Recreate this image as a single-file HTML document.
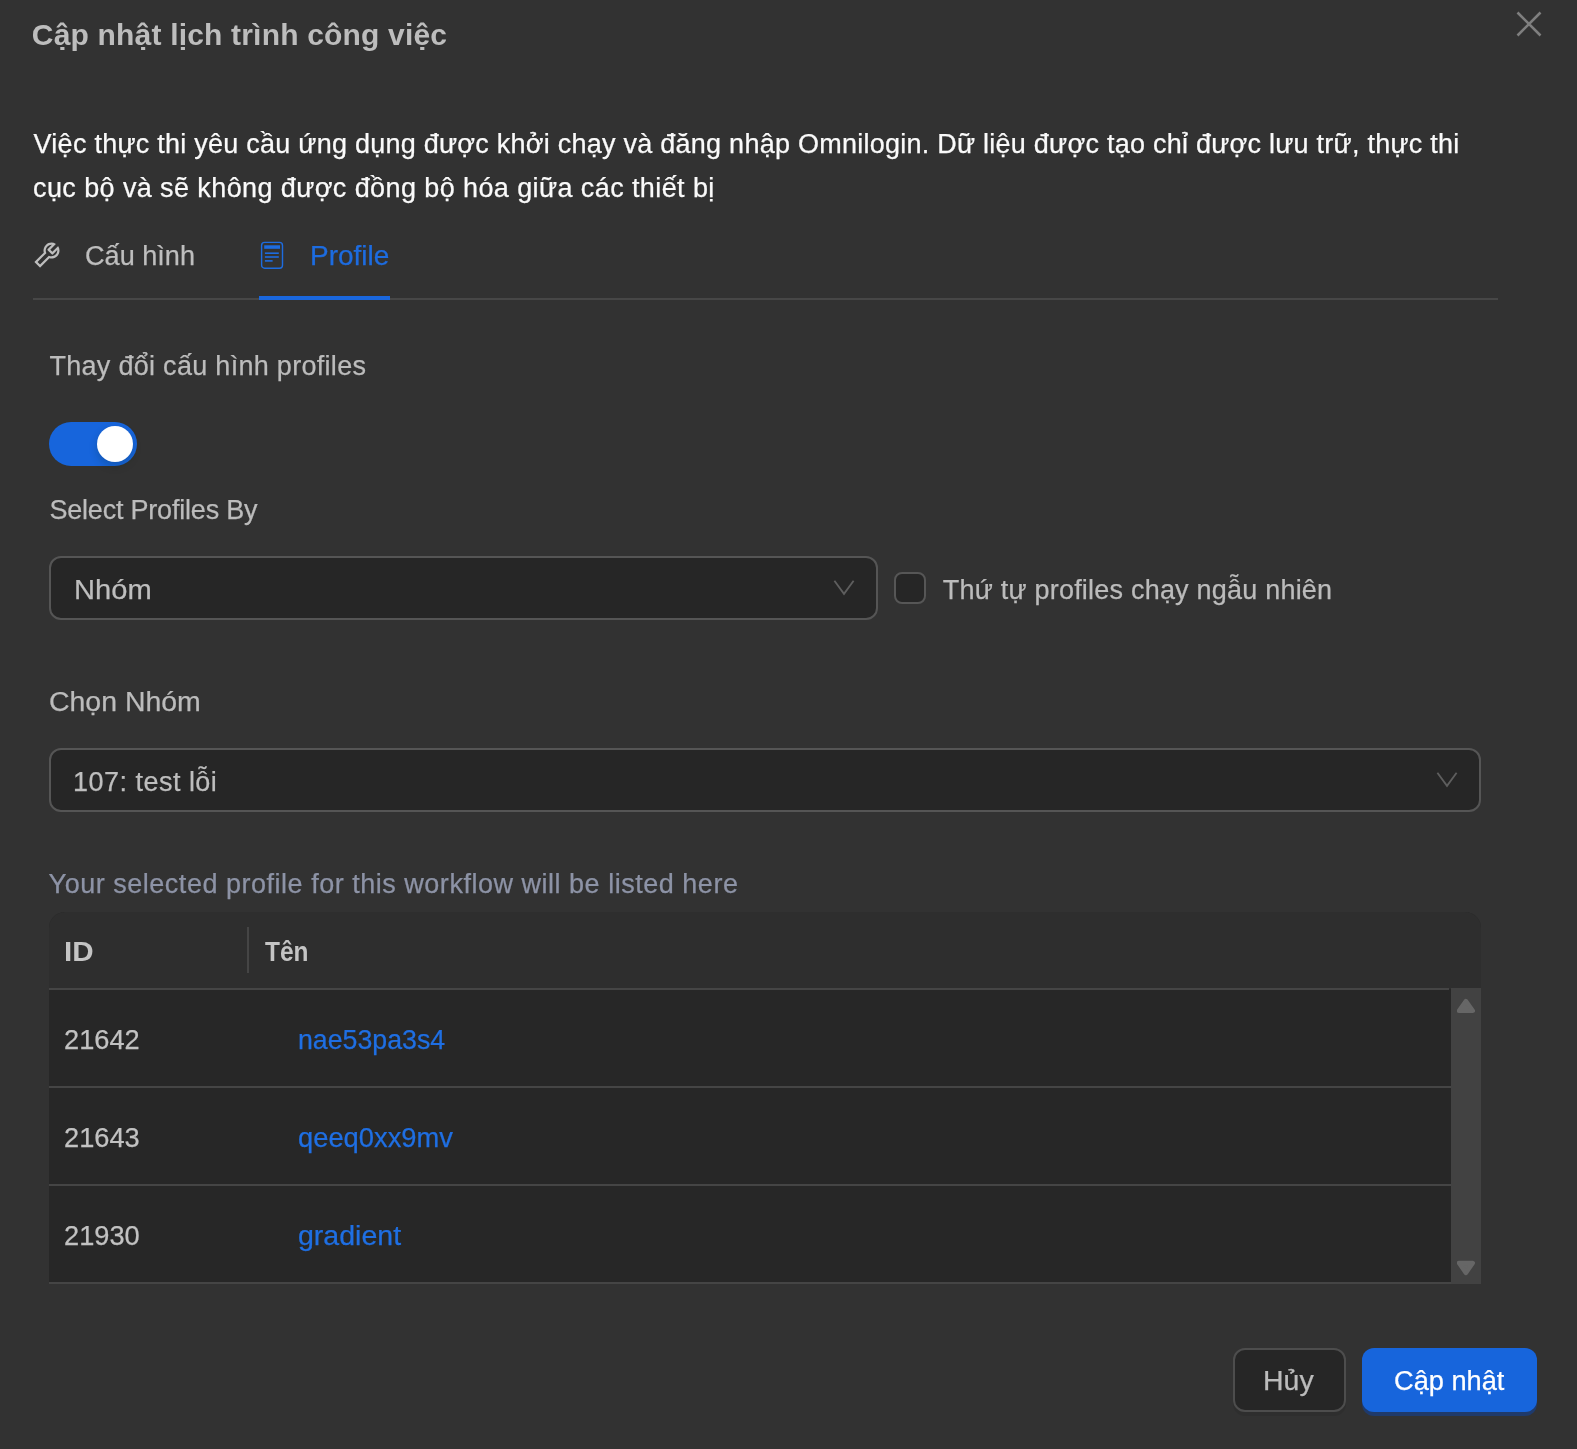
<!DOCTYPE html>
<html lang="vi">
<head>
<meta charset="utf-8">
<title>Cập nhật lịch trình công việc</title>
<style>
*{box-sizing:border-box;margin:0;padding:0}
html,body{width:1577px;height:1449px;overflow:hidden;background:#323232}
body{position:relative;font-family:"Liberation Sans",sans-serif;font-size:27px;color:#bcbcbc;-webkit-text-stroke:0.25px}
#root{position:absolute;left:0;top:0;width:1577px;height:1449px;will-change:transform}
.abs{position:absolute;white-space:nowrap;line-height:1}
.t{display:inline-block;white-space:nowrap;transform-origin:0 50%}
/* header */
.modal-title{left:33px;top:15px;height:40px;line-height:40px;font-size:30px;font-weight:700;color:#bdbdbd;-webkit-text-stroke:0}
.close{left:1515px;top:10px;width:28px;height:28px}
.desc{left:33px;top:122px;width:1470px;color:#fafafa;font-size:27px}
.desc>span{display:block;height:44px;line-height:44px;white-space:nowrap}
/* tabs */
.tabs{left:33px;top:220px;width:1465px;height:80px;border-bottom:2px solid #474747}
.tab{position:absolute;top:0;height:80px;display:flex;align-items:center}
.tab .lbl{position:absolute;top:18px;height:36px;line-height:36px}
.tab1{left:0;width:165px;color:#bebebe}
.tab2{left:226px;width:131px;color:#1d6ce0}
.ink{position:absolute;left:226px;top:76px;width:131px;height:4px;background:#1a67dd}
/* form */
.label{left:49px;height:36px;line-height:36px;color:#bcbcbc}
.switch{left:49px;top:422px;width:88px;height:44px;border-radius:22px;background:#1765dc}
.switch i{position:absolute;left:48px;top:4px;width:36px;height:36px;border-radius:50%;background:#fff;box-shadow:0 4px 8px rgba(0,35,11,.2)}
.select{height:64px;border:2px solid #555;border-radius:12px;background:#262626;color:#bebebe}
.select .val{position:absolute;left:23px;top:14px;height:36px;line-height:36px}
.select svg{position:absolute;right:21px;top:22px}
.checkbox{left:894px;top:572px;width:32px;height:32px;border:2px solid #565656;border-radius:8px;background:#262626}
/* table */
.hint{left:49px;top:866px;height:36px;line-height:36px;color:#8d93a6}
.table{left:49px;top:912px;width:1432px;height:372px;border-radius:16px 16px 0 0;overflow:hidden;background:#272727}
.thead{position:absolute;left:0;top:0;width:1432px;height:77px;background:#2e2e2e;color:#c4c4c4;-webkit-text-stroke:0}
.thead b{font-weight:700;position:absolute;top:22px;height:36px;line-height:36px}
.thead .sep{position:absolute;left:198px;top:15px;width:2px;height:46px;background:#454545}
.hline{position:absolute;left:0;width:1402px;height:2px;background:#454545}
.row{position:absolute;left:0;width:1402px;height:96px}
.row>span,.row>a{position:absolute;top:32px;height:36px;line-height:36px;text-decoration:none}
.row>span{left:16px;color:#c2c2c2}
.row>a{left:248px;color:#1f6fe3}
.sbar{position:absolute;left:1402px;top:76px;width:30px;height:296px;background:#424242}
/* footer */
.btn{top:1348px;height:64px;border-radius:12px;text-align:center;font-size:27px}
.btn>span{display:inline-block;line-height:62px}
.btn-cancel{left:1233px;width:113px;border:2px solid #4d4d4d;background:#262626;color:#bcbcbc;box-shadow:0 4px 0 rgba(0,0,0,.08)}
.btn-ok{left:1362px;width:175px;background:#1765dc;color:#fff;box-shadow:0 4px 0 #1f3a6b}
.btn-ok>span{line-height:66px}
</style>
</head>
<body>
<div id="root">
<div class="abs modal-title"><span class="t" id="t_title" style="letter-spacing:0.185px;margin-left:-1.2px">Cập nhật lịch trình công việc</span></div>
<svg class="abs close" viewBox="0 0 28 28"><path d="M2.5 2.5L25.5 25.5M25.5 2.5L2.5 25.5" stroke="#7f7f7f" stroke-width="2.6" fill="none"/></svg>

<div class="abs desc">
<span><span class="t" id="t_d1" style="letter-spacing:0.250px;margin-left:0.6px">Việc thực thi yêu cầu ứng dụng được khởi chạy và đăng nhập Omnilogin. Dữ liệu được tạo chỉ được lưu trữ, thực thi</span></span>
<span><span class="t" id="t_d2" style="letter-spacing:0.405px;margin-left:0.0px">cục bộ và sẽ không được đồng bộ hóa giữa các thiết bị</span></span>
</div>

<div class="abs tabs">
  <div class="tab tab1">
    <svg style="position:absolute;left:0px;top:21px" width="28" height="28" viewBox="64 64 896 896" fill="#bebebe"><path d="M876.6 239.5c-.5-.9-1.2-1.8-2-2.500-5-5-13.100-5-18.100 0L684.200 409.300l-67.900-67.900L788.700 169c.8-.8 1.400-1.600 2-2.500 3.600-6.100 1.600-13.900-4.500-17.500-98.200-58-226.800-44.700-311.300 39.700-67 67-89.200 162-66.500 247.400l-293 293c-3 3-2.800 7.900.3 11l169.700 169.700c3.100 3.100 8.100 3.300 11 .3l292.900-292.900c85.500 22.800 180.500.7 247.600-66.400 84.400-84.500 97.700-213.100 39.700-311.300zM786 499.800c-58.100 58.100-145.300 69.300-214.600 33.600l-8.800 8.800-.1-.1-274 274.100-79.200-79.200 230.100-230.100s0 .1.1.1l52.800-52.800c-35.700-69.300-24.500-156.500 33.600-214.600a184.200 184.200 0 01144-53.500L537 318.900a32.050 32.050 0 000 45.300l124.500 124.500a32.050 32.050 0 0045.300 0l132.800-132.800c3.700 51.800-14.400 104.800-53.600 143.900z"/></svg>
    <span class="lbl" style="left:52px"><span class="t" id="t_tab1" style="transform:scaleX(1.0036);margin-left:-0.2px">Cấu hình</span></span>
  </div>
  <div class="tab tab2">
    <svg style="position:absolute;left:1px;top:21px" width="24" height="29" viewBox="0 0 24 29" fill="none"><rect x="1.6" y="1.4" width="20.9" height="25.8" rx="3" stroke="#1d6ce0" stroke-width="1.4"/><rect x="4.2" y="4.3" width="15.8" height="3.5" fill="#1d6ce0"/><rect x="4.9" y="11.4" width="13.9" height="1.6" fill="#1d6ce0"/><rect x="4.9" y="15.2" width="13.9" height="1.6" fill="#1d6ce0"/><rect x="4.9" y="19.1" width="7.7" height="1.6" fill="#1d6ce0"/></svg>
    <span class="lbl" style="left:52px"><span class="t" id="t_tab2" style="transform:scaleX(1.0359);margin-left:-1.4px">Profile</span></span>
  </div>
  <div class="ink"></div>
</div>

<div class="abs label" style="top:348px"><span class="t" id="t_l1" style="letter-spacing:0.296px;margin-left:0.4px">Thay đổi cấu hình profiles</span></div>
<div class="abs switch"><i></i></div>
<div class="abs label" style="top:492px"><span class="t" id="t_l2" style="letter-spacing:-0.201px;margin-left:0.4px">Select Profiles By</span></div>

<div class="abs select" style="left:49px;top:556px;width:829px">
  <span class="val"><span class="t" id="t_s1" style="transform:scaleX(1.0785);margin-left:-0.4px">Nhóm</span></span>
  <svg width="22" height="16" viewBox="0 0 22 16"><path d="M1.4 0.8L11 13.9L20.6 0.8" stroke="#5e5e5e" stroke-width="1.8" fill="none"/></svg>
</div>
<div class="abs checkbox"></div>
<div class="abs label" style="left:942px;top:572px"><span class="t" id="t_cb" style="letter-spacing:0.215px;margin-left:0.8px">Thứ tự profiles chạy ngẫu nhiên</span></div>

<div class="abs label" style="top:684px"><span class="t" id="t_l3" style="transform:scaleX(1.0535);margin-left:-0.4px">Chọn Nhóm</span></div>
<div class="abs select" style="left:49px;top:748px;width:1432px">
  <span class="val"><span class="t" id="t_s2" style="letter-spacing:0.482px;margin-left:-1.0px">107: test lỗi</span></span>
  <svg width="22" height="16" viewBox="0 0 22 16"><path d="M1.4 0.8L11 13.9L20.6 0.8" stroke="#5e5e5e" stroke-width="1.8" fill="none"/></svg>
</div>

<div class="abs hint"><span class="t" id="t_hint" style="letter-spacing:0.517px;margin-left:-0.4px">Your selected profile for this workflow will be listed here</span></div>

<div class="abs table">
  <div class="thead">
    <b style="left:16px"><span class="t" id="t_h1" style="transform:scaleX(1.0958);margin-left:-1.0px">ID</span></b>
    <i class="sep"></i>
    <b style="left:216px"><span class="t" id="t_h2" style="transform:scaleX(0.9049);margin-left:0.4px">Tên</span></b>
  </div>
  <div class="hline" style="top:76px;width:1400px"></div>
  <div class="row" style="top:78px"><span><span class="t" id="t_r1a" style="transform:scaleX(1.0081);margin-left:-0.8px">21642</span></span><a><span class="t" id="t_r1b" style="transform:scaleX(0.9906);margin-left:0.8px">nae53pa3s4</span></a></div>
  <div class="hline" style="top:174px"></div>
  <div class="row" style="top:176px"><span><span class="t" id="t_r2a" style="transform:scaleX(1.0083);margin-left:-0.8px">21643</span></span><a><span class="t" id="t_r2b" style="transform:scaleX(1.0119);margin-left:0.8px">qeeq0xx9mv</span></a></div>
  <div class="hline" style="top:272px"></div>
  <div class="row" style="top:274px"><span><span class="t" id="t_r3a" style="transform:scaleX(1.0081);margin-left:-0.8px">21930</span></span><a><span class="t" id="t_r3b" style="transform:scaleX(1.0565);margin-left:0.8px">gradient</span></a></div>
  <div class="hline" style="top:370px"></div>
  <div class="sbar">
    <svg style="position:absolute;left:6px;top:10px" width="20" height="16" viewBox="0 0 20 16"><path d="M8.9 3L15.8 12.8H2Z" fill="#666" stroke="#666" stroke-width="4.4" stroke-linejoin="round"/></svg>
    <svg style="position:absolute;left:6px;top:272px" width="20" height="16" viewBox="0 0 20 16"><path d="M8.9 13L15.8 3H2Z" fill="#666" stroke="#666" stroke-width="4.4" stroke-linejoin="round"/></svg>
  </div>
</div>

<div class="abs btn btn-cancel"><span><span class="t" id="t_b1" style="transform:scaleX(1.0559);margin-left:-4.6px">Hủy</span></span></div>
<div class="abs btn btn-ok"><span><span class="t" id="t_b2" style="transform:scaleX(1.0073);margin-left:-2.2px">Cập nhật</span></span></div>
</div>
</body>
</html>
